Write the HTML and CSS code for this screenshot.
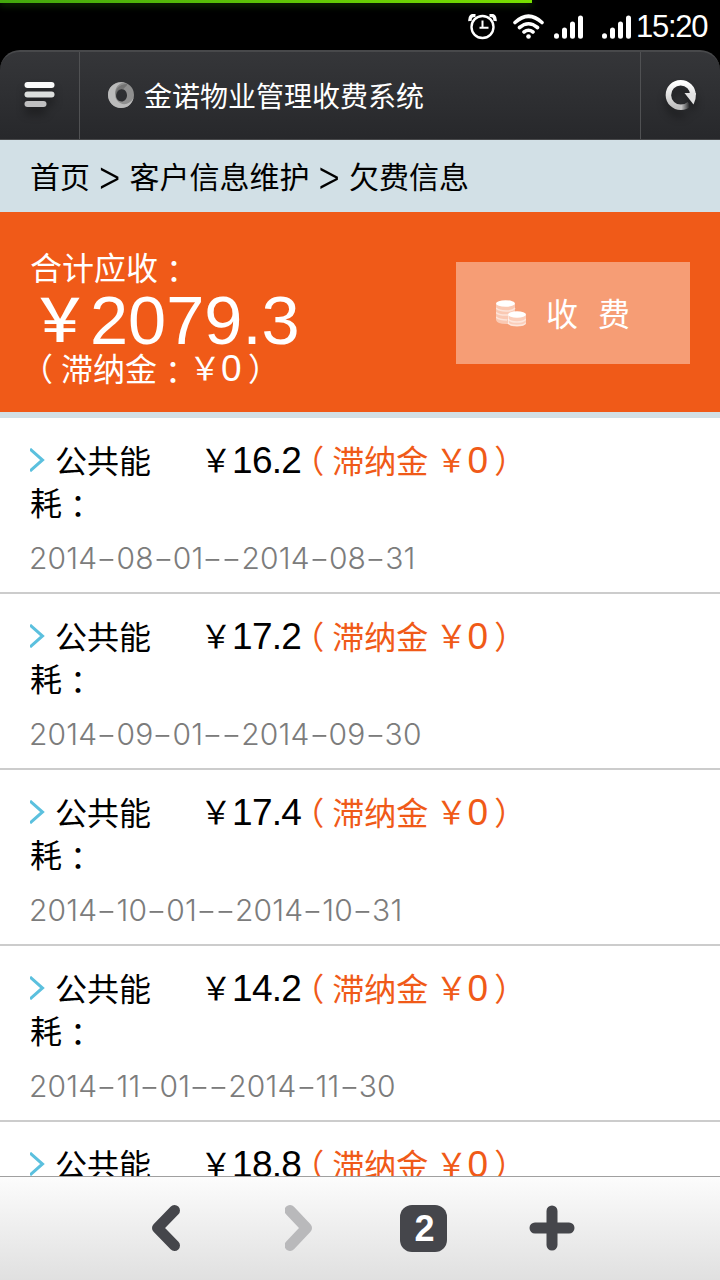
FILE: index.html
```html
<!DOCTYPE html>
<html lang="zh-CN">
<head>
  <meta charset="UTF-8" />
  <meta name="viewport" content="width=device-width, initial-scale=1" />
  <title>金诺物业管理收费系统</title>
  <link rel="stylesheet" href="styles.css">
</head>
<body>

  <div class="status-bar">
    <div class="progress"></div>
    <svg class="status-icons" width="170" height="26" viewBox="0 0 170 26" fill="none" stroke="#fff">
      <circle cx="14.500" cy="13" r="11" stroke-width="2.400" />
      <path d="M14.500 6.500V14M11.500 13.800H20.500" stroke-width="2" />
      <path d="M2 7Q1.500 1 7.500 1.300M27 7Q27.500 1 21.500 1.300" stroke-width="3.500" />
      <path d="M47 8.500Q60.500 -4 74 8.500M51.500 13.500Q60.500 6 69.500 13.500M56 18Q60.500 14.500 65 18" stroke-width="3.600" stroke-linecap="round" />
      <circle cx="60.500" cy="22.500" r="2.300" fill="#fff" stroke="none" />
      <path d="M88.500 21.800v.5M96.500 16v6.300M104.500 10v12.300M112.500 4v18.300M136.500 21.800v.5M144.500 16v6.300M152.500 10v12.300M160.500 4v18.300" stroke-width="5" stroke-linecap="round" />
    </svg>
    <span class="time">15:20</span>
  </div>

  <header class="topbar">
    <button class="menu-btn" aria-label="菜单">
      <svg width="32" height="28" viewBox="0 0 32 28">
        <defs>
          <linearGradient id="silver" x1="0" y1="0" x2="0" y2="1">
            <stop offset="0" stop-color="#fff" />
            <stop offset="1" stop-color="#bfbfbf" />
          </linearGradient>
        </defs>
        <rect x=".5" y="1" width="30" height="6" rx="3" fill="#fafafa" />
        <rect x=".5" y="10.500" width="30" height="6" rx="3" fill="#dcdedd" />
        <rect x=".5" y="20" width="22" height="6" rx="3" fill="#bfbfc0" />
      </svg>
    </button>
    <div class="site">
      <svg width="26" height="26" viewBox="0 0 26 26">
        <path fill="#8f8f8f" fill-rule="evenodd" d="M13 0a13 13 0 1 0 0 26a13 13 0 1 0 0-26M13.500 7c3 0 5.500 2.800 5.500 6.200s-2.500 6.300-5.500 6.300S8 16.700 8 13.300S10.500 7 13.500 7z" />
        <path fill="#bbb" fill-rule="evenodd" d="M17 .6C7 1 4.500 13 9.500 19C14 24 22 23 25.400 16C24 22 20 26 13 26C6 26 0 20 0 13C0 5 7-1 17 .6z" />
        <path fill="#666" d="M19 2C11 2 6 8 8.200 14C8.500 9 12 6.500 15 7.300C18 4 20 3 19 2z" opacity=".7" />
      </svg>
      <h1>金诺物业管理收费系统</h1>
    </div>
    <button class="reload-btn" aria-label="刷新">
      <svg width="32" height="32" viewBox="0 0 32 32">
        <defs>
          <linearGradient id="tail" x1="0" y1="0" x2="1" y2="0">
            <stop offset="0" stop-color="#cfcfcf" />
            <stop offset="1" stop-color="#cfcfcf" stop-opacity="0" />
          </linearGradient>
        </defs>
        <path d="M28 16A12.300 12.300 0 1 0 16 28.300" fill="none" stroke="url(#silver)" stroke-width="5.500" />
        <path d="M15.800 28.300Q21 28.300 24.500 25" fill="none" stroke="url(#tail)" stroke-width="5.500" />
        <path d="M19.500 14H31Q31.300 20 28.500 25.500Z" fill="#e2e2e2" />
      </svg>
    </button>
  </header>

  <nav class="breadcrumb">
    <span>首页</span><span class="sep">&gt;</span><span>客户信息维护</span><span class="sep">&gt;</span><span>欠费信息</span>
  </nav>

  <section class="summary">
    <div class="total">
      <p>合计应收<span class="colon" lang="zh-TW">：</span></p>
      <p class="amount"><span class="yen">￥</span>2079.3</p>
      <p><span class="open">（</span>滞纳金<span class="colon" lang="zh-TW">：</span><span class="sign">￥</span><span class="num">0</span><span class="close">）</span></p>
    </div>
    <button class="pay-btn">
      <svg width="30" height="27" viewBox="0 0 30 27">
        <path d="M0 4V20Q1 24 10 24H13V16Q13 12 19 12V4z" fill="#fff" opacity=".45" />
        <path d="M12 15V23Q13 26.500 21 26.500T30 23V15z" fill="#fff" opacity=".5" />
        <path d="M0 8Q3 11 10 11T19 8M0 12.500Q3 15.500 12 15M0 17Q3 20 11 20M12 19Q14 22 21 22T30 19M12 23Q14 25.500 21 25.500T30 23" fill="none" stroke="#fff" stroke-width="1.500" opacity=".5" />
        <ellipse cx="9.500" cy="3.500" rx="9.500" ry="3.300" fill="#fff" />
        <ellipse cx="21" cy="14.500" rx="9" ry="3.200" fill="#fff" />
      </svg>
      <span>收</span><span>费</span>
    </button>
  </section>

  <ul class="fees">
    <li>
      <div class="label"><svg class="arrow" width="16" height="24" viewBox="0 0 16 24"><path d="M0 1L12.500 12L0 23" /></svg>公共能耗<span class="colon" lang="zh-TW">：</span></div>
      <div class="price"><span class="sign">￥</span><span class="num">16.2</span><span class="late"><span class="open">（</span>滞纳金 <span class="sign">￥</span><span class="num">0</span><span class="close">）</span></span></div>
      <div class="date">2014<i>-</i>08<i>-</i>01<i>-</i><i>-</i>2014<i>-</i>08<i>-</i>31</div>
    </li>
    <li>
      <div class="label"><svg class="arrow" width="16" height="24" viewBox="0 0 16 24"><path d="M0 1L12.500 12L0 23" /></svg>公共能耗<span class="colon" lang="zh-TW">：</span></div>
      <div class="price"><span class="sign">￥</span><span class="num">17.2</span><span class="late"><span class="open">（</span>滞纳金 <span class="sign">￥</span><span class="num">0</span><span class="close">）</span></span></div>
      <div class="date">2014<i>-</i>09<i>-</i>01<i>-</i><i>-</i>2014<i>-</i>09<i>-</i>30</div>
    </li>
    <li>
      <div class="label"><svg class="arrow" width="16" height="24" viewBox="0 0 16 24"><path d="M0 1L12.500 12L0 23" /></svg>公共能耗<span class="colon" lang="zh-TW">：</span></div>
      <div class="price"><span class="sign">￥</span><span class="num">17.4</span><span class="late"><span class="open">（</span>滞纳金 <span class="sign">￥</span><span class="num">0</span><span class="close">）</span></span></div>
      <div class="date">2014<i>-</i>10<i>-</i>01<i>-</i><i>-</i>2014<i>-</i>10<i>-</i>31</div>
    </li>
    <li>
      <div class="label"><svg class="arrow" width="16" height="24" viewBox="0 0 16 24"><path d="M0 1L12.500 12L0 23" /></svg>公共能耗<span class="colon" lang="zh-TW">：</span></div>
      <div class="price"><span class="sign">￥</span><span class="num">14.2</span><span class="late"><span class="open">（</span>滞纳金 <span class="sign">￥</span><span class="num">0</span><span class="close">）</span></span></div>
      <div class="date">2014<i>-</i>11<i>-</i>01<i>-</i><i>-</i>2014<i>-</i>11<i>-</i>30</div>
    </li>
    <li>
      <div class="label"><svg class="arrow" width="16" height="24" viewBox="0 0 16 24"><path d="M0 1L12.500 12L0 23" /></svg>公共能</div>
      <div class="price"><span class="sign">￥</span><span class="num">18.8</span><span class="late"><span class="open">（</span>滞纳金 <span class="sign">￥</span><span class="num">0</span><span class="close">）</span></span></div>
    </li>
  </ul>

  <footer class="toolbar">
    <svg width="28" height="46" viewBox="0 0 28 46"><path d="M22.500 5.500L5.500 23L22.500 40.500" /></svg>
    <svg class="disabled" width="28" height="46" viewBox="0 0 28 46"><path d="M5 5.500L21.500 23L5 40.500" /></svg>
    <span class="tabs">2</span>
    <svg width="46" height="46" viewBox="0 0 46 46"><path d="M23 6V40M6 23H40" /></svg>
  </footer>

</body>
</html>
```
FILE: styles.css
```css
* {
  box-sizing: border-box;
  margin: 0;
  padding: 0;
}

body {
  display: flex;
  flex-direction: column;
  height: 1280px;
  overflow: hidden;
  background: #000;
  color: #000;
  font-family: "Noto Sans CJK SC", sans-serif;
  font-size: 32px;
}

button {
  border: none;
  background: none;
  font: inherit;
  color: inherit;
  cursor: pointer;
}

svg {
  display: block;
  flex: none;
}

/* status bar */
.status-bar {
  position: relative;
  display: flex;
  justify-content: flex-end;
  align-items: center;
  height: 50px;
  padding: 3px 12px 0 0;
  flex: none;
}

.status-icons {
  margin-right: -2px;
}

.progress {
  position: absolute;
  top: 0;
  left: 0;
  width: 532px;
  height: 3px;
  background: linear-gradient(to right, #43a80d, #78e000);
  box-shadow: 0 2px 7px #174d00;
}

.time {
  width: 72px;
  color: #fff;
  font-family: "Liberation Sans", sans-serif;
  font-size: 31px;
  letter-spacing: -1.3px;
  line-height: 44px;
}

/* browser top bar */
.topbar {
  display: flex;
  height: 90px;
  flex: none;
  border-top: 2px solid #48494b;
  border-bottom: 1px solid #48494b;
  border-radius: 20px 20px 0 0;
  background: linear-gradient(#353639, #27282b);
}

.menu-btn,
.reload-btn {
  display: flex;
  justify-content: center;
  align-items: center;
  width: 80px;
  padding-bottom: 2px;
}

.menu-btn svg,
.reload-btn svg {
  filter: drop-shadow(0 7px 4px rgba(0, 0, 0, 0.4));
}

.menu-btn {
  border-right: 1px solid #505153;
}

.reload-btn {
  border-left: 1px solid #505153;
}

.site {
  display: flex;
  flex: 1;
  align-items: center;
  gap: 10px;
  padding: 0 0 2px 28px;
  color: #fff;
}

.site h1 {
  font-size: 28px;
  font-weight: 400;
  line-height: 40px;
}

.breadcrumb {
  display: flex;
  align-items: center;
  height: 72px;
  padding: 0 30px 3px;
  flex: none;
  background: #d2e0e6;
  font-size: 30px;
}

.sep {
  width: 39.5px;
  font-size: 38px;
  font-weight: 300;
  line-height: 32px;
  text-align: center;
  transform: scaleY(1.35);
}

/* total amount */
.summary {
  display: flex;
  justify-content: space-between;
  align-items: center;
  height: 206px;
  padding: 0 30px;
  flex: none;
  border-bottom: 6px solid #d2e0e6;
  background: #f05a18;
  color: #fff;
}

.total {
  padding-top: 9px;
  line-height: 42px;
  white-space: nowrap;
}

.amount {
  padding-top: 9px;
  font-family: "Liberation Sans", sans-serif;
  font-size: 68.5px;
  line-height: 50px;
}

.yen {
  font-family: "Noto Sans CJK SC", sans-serif;
  font-size: 60px;
  font-weight: 500;
  line-height: 0;
  vertical-align: 2px;
}

.colon {
  font-family: "Noto Sans CJK TC", sans-serif;
  line-height: 0;
  vertical-align: -3px;
}

.sign {
  line-height: 0;
  vertical-align: 1.5px;
}

.open {
  margin: 0 8px 0 -9px;
}

.close {
  margin: 0 -7px 0 7px;
}

.num {
  font-family: "Liberation Sans", sans-serif;
  font-size: 37px;
  letter-spacing: -0.7px;
  line-height: 0;
}

.pay-btn {
  display: flex;
  align-items: center;
  gap: 20px;
  width: 234px;
  height: 102px;
  margin-top: 2px;
  padding-left: 40px;
  background: #f69d75;
}

.pay-btn span {
  margin-top: -2px;
}

/* fee list */
.fees {
  flex: 1;
  min-height: 0;
  overflow: hidden;
  list-style: none;
  background: #fff;
}

.fees li {
  display: grid;
  grid-template-columns: 170px 1fr;
  grid-template-rows: 84px 42px;
  row-gap: 15px;
  height: 176px;
  padding: 20px 30px 0;
  border-bottom: 2px solid #ccc;
  line-height: 42px;
}

.label {
  padding-right: 30px;
}

.arrow {
  display: inline-block;
  margin-right: 9px;
  vertical-align: 1px;
  fill: none;
  stroke: #5bc0de;
  stroke-width: 3;
}

.price {
  white-space: nowrap;
}

.late {
  color: #f05a18;
}

.date {
  grid-column: 1 / -1;
  margin-left: -1px;
  color: #7c7c7c;
  font-family: Inter, sans-serif;
  font-size: 30px;
  font-weight: 300;
  letter-spacing: 0.2px;
}

.date i {
  display: inline-block;
  width: 19px;
  font-style: normal;
  text-align: center;
  transform: scaleX(1.5);
}

/* bottom toolbar */
.toolbar {
  display: flex;
  align-items: center;
  height: 104px;
  padding-left: 152px;
  flex: none;
  border-top: 1px solid #a0a0a0;
  background: linear-gradient(#fcfcfc, #e0e0e0);
}

.toolbar svg {
  margin-top: -1px;
  fill: none;
  stroke: #45464b;
  stroke-width: 11;
  stroke-linecap: round;
  stroke-linejoin: round;
}

.toolbar .disabled {
  margin: -1px 87px 0 105px;
  stroke: #b9b9bb;
}

.tabs {
  width: 47px;
  height: 47px;
  margin-right: 81.5px;
  padding-left: 2px;
  border-radius: 12px;
  background: #45464b;
  color: #fff;
  font-family: "Liberation Sans", sans-serif;
  font-size: 36px;
  font-weight: 700;
  line-height: 48px;
  text-align: center;
}
```
